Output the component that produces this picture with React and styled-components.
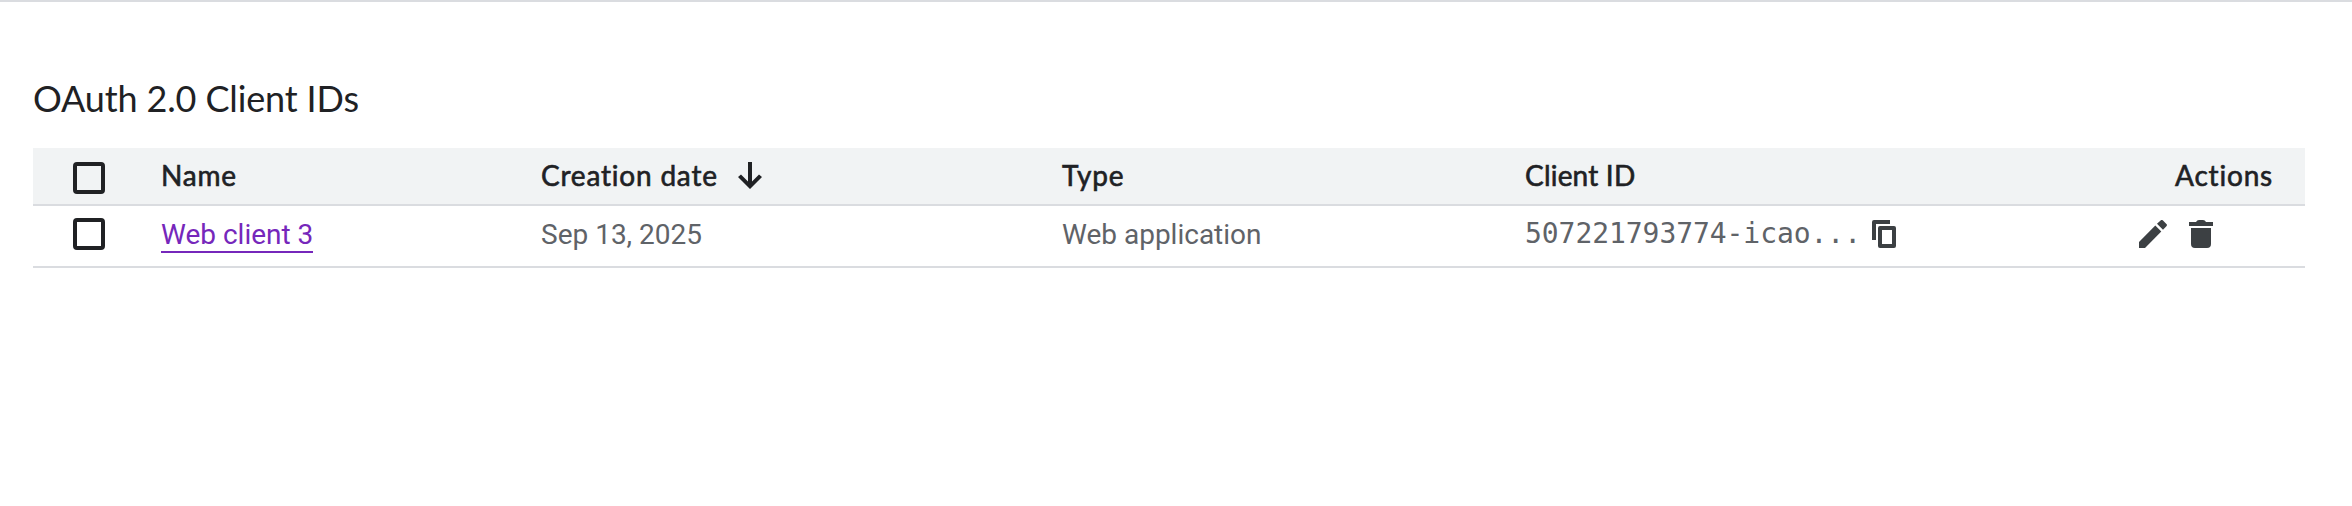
import React from 'react';
import styled, { createGlobalStyle } from 'styled-components';

const GlobalStyle = createGlobalStyle`
  * { box-sizing: border-box; }
  body { margin: 0; background: #fff; }
`;

const Page = styled.main`
  min-height: 506px;
  padding: 74px 47px 0 33px;
  border-top: 2px solid #dadce0;
  font-family: Roboto, sans-serif;
`;

const Title = styled.h2`
  margin: 0;
  height: 72px;
  font: 400 36px/44px Lato, sans-serif;
  font-variant-ligatures: none;
  letter-spacing: -0.14px;
  color: #202124;
  white-space: nowrap;
`;

const Row = styled.div`
  display: grid;
  grid-template-columns: 128px 380px 521px 463px 1fr;
  align-items: center;
  height: ${(p) => (p.$header ? 58 : 62)}px;
  padding-bottom: 4px;
  background: ${(p) => (p.$header ? '#f1f3f4' : '#fff')};
  border-bottom: 2px solid #dadce0;
`;

const CheckCell = styled.div`
  padding: ${(p) => p.$top || 0}px 0 0 40px;
`;

const Checkbox = styled.button`
  display: block;
  width: 32px;
  height: 32px;
  padding: 0;
  border: 4px solid #202124;
  border-radius: 4px;
  background: transparent;
`;

const HeadCell = styled.div`
  display: flex;
  align-items: center;
  justify-content: space-between;
  padding-top: 2px;
  font: 400 28px/36px Lato, sans-serif;
  font-variant-ligatures: none;
  -webkit-text-stroke: 0.6px #202124;
  letter-spacing: 0.8px;
  color: #202124;
`;

const LastHeadCell = styled(HeadCell)`
  padding-right: 32px;
`;

const SortableCell = styled(HeadCell)`
  justify-content: flex-start;
`;

const TightLabel = styled.span`
  letter-spacing: 0.2px;
`;

const Cell = styled.div`
  display: flex;
  align-items: center;
  padding-top: 2px;
  font-size: 28px;
  line-height: 36px;
  color: #5f6368;
`;

const NameLink = styled.a`
  height: 36px;
  border-bottom: 2px solid #7627bb;
  color: #7627bb;
  text-decoration: none;
`;

const ClientCell = styled.div`
  display: grid;
  grid-template-columns: 347px 24px 1fr;
  align-items: center;
`;

const ClientId = styled.code`
  font: 28px/36px 'DejaVu Sans Mono', monospace;
  letter-spacing: -0.06px;
  color: #5f6368;
`;

const Actions = styled.div`
  display: flex;
  align-items: center;
  gap: 22px;
  margin-left: 243px;
`;

const Icon = styled.svg`
  display: block;
  flex: none;
  fill: ${(p) => p.$color || '#3c4043'};
`;

const SortIcon = styled(Icon)`
  margin-left: 20px;
  stroke: none;
`;

function ArrowDown() {
  return (
    <SortIcon width="24" height="27" viewBox="0 0 24 27" $color="#202124">
      <path d="M10 0h4v19.4l7-7L24 15 12 27 0 15l3-2.6 7 7z" />
    </SortIcon>
  );
}

function CopyIcon() {
  return (
    <Icon width="24" height="28" viewBox="0 0 24 28">
      <path d="M18 0H2Q0 0 0 2v18h4V4h14zM22 6H8Q6 6 6 8v18q0 2 2 2h14q2 0 2-2V8q0-2-2-2zm-2 18H10V10h10z" fillRule="evenodd" />
    </Icon>
  );
}

function EditIcon() {
  return (
    <Icon width="28" height="28" viewBox="0 0 28 28">
      <path d="M0 22v6h6L22.3 11.4l-6-6zM18 3.7l6 6 3.4-3.4q1.2-1.2 0-2.4L24 .5q-1.2-1.2-2.4 0z" />
    </Icon>
  );
}

function TrashIcon() {
  return (
    <Icon width="24" height="28" viewBox="0 0 24 28">
      <path d="M0 2h7q1-2 3-2h4q2 0 3 2h7v4H0zM2 8h20v16q0 4-4 4H6q-4 0-4-4z" />
    </Icon>
  );
}

export default function App() {
  return (
    <>
      <GlobalStyle />
      <Page>
        <Title>OAuth 2.0 Client IDs</Title>
        <section>
          <Row $header>
            <CheckCell $top={8}><Checkbox aria-label="Select all" /></CheckCell>
            <HeadCell>Name</HeadCell>
            <SortableCell>Creation date<ArrowDown /></SortableCell>
            <HeadCell>Type</HeadCell>
            <LastHeadCell>
              <TightLabel>Client ID</TightLabel>
              <span>Actions</span>
            </LastHeadCell>
          </Row>
          <Row>
            <CheckCell><Checkbox aria-label="Select client" /></CheckCell>
            <Cell><NameLink>Web client 3</NameLink></Cell>
            <Cell>Sep 13, 2025</Cell>
            <Cell>Web application</Cell>
            <ClientCell>
              <ClientId>507221793774-icao...</ClientId>
              <CopyIcon />
              <Actions><EditIcon /><TrashIcon /></Actions>
            </ClientCell>
          </Row>
        </section>
      </Page>
    </>
  );
}
